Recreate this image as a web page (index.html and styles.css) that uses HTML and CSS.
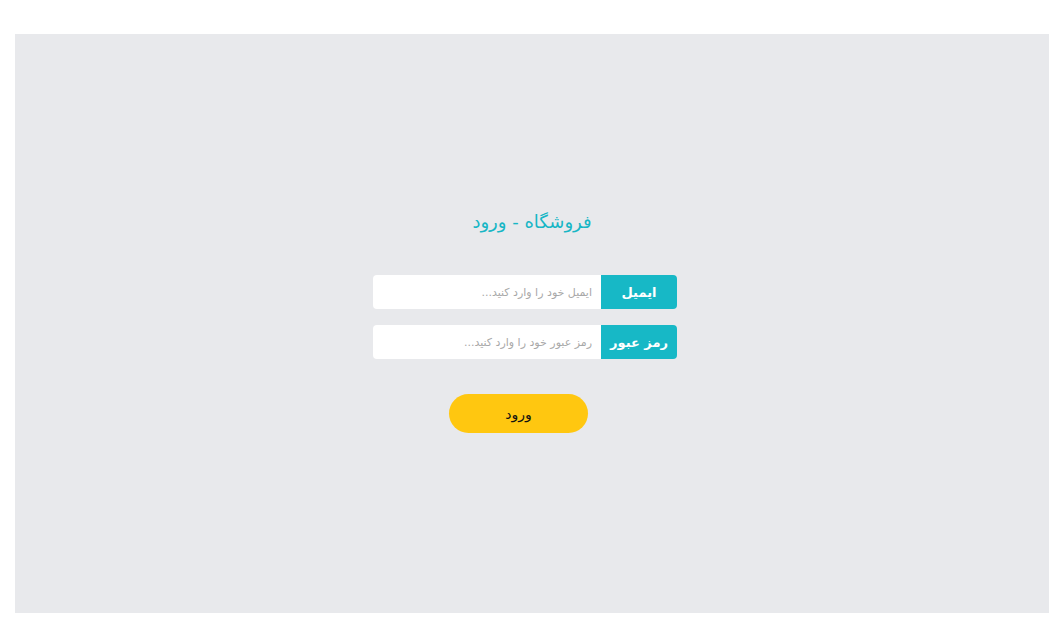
FILE: index.html
```html
<!DOCTYPE html>
<html lang="fa" dir="rtl">
<head>
<meta charset="utf-8">
<title>فروشگاه - ورود</title>
<link rel="stylesheet" href="styles.css">
</head>
<body>
<div class="panel">
  <div class="login">
    <h1 class="title">فروشگاه - ورود</h1>
    <form class="form">
      <div class="group">
        <span class="label">ایمیل</span>
        <input class="field" type="text" placeholder="ایمیل خود را وارد کنید...">
      </div>
      <div class="group">
        <span class="label">رمز عبور</span>
        <input class="field" type="password" placeholder="رمز عبور خود را وارد کنید...">
      </div>
      <button class="btn" type="button">ورود</button>
    </form>
  </div>
</div>
</body>
</html>
```
FILE: styles.css
```css
html, body {
  margin: 0;
  padding: 0;
  background: #ffffff;
}
body {
  padding: 34px 8px 0 15px;
  font-family: "DejaVu Sans", "Noto Sans", sans-serif;
}
.panel {
  background: #e8e9ec;
  height: 579px;
  display: flex;
  justify-content: center;
}
.login {
  display: flex;
  flex-direction: column;
  align-items: center;
  padding-top: 173px;
}
.title {
  margin: 0;
  font-size: 18px;
  font-weight: normal;
  color: #17b6c5;
  line-height: 30px;
  height: 30px;
}
.form {
  margin: 38px 14px 0 0;
  width: 304px;
  display: flex;
  flex-direction: column;
  align-items: center;
}
.group {
  display: flex;
  width: 304px;
  height: 34px;
  margin-bottom: 16px;
}
.label {
  width: 76px;
  flex: none;
  background: #17b8c6;
  color: #ffffff;
  font-weight: bold;
  font-size: 13px;
  display: flex;
  align-items: center;
  justify-content: center;
  border-radius: 0 4px 4px 0;
}
.field {
  flex: 1;
  min-width: 0;
  border: none;
  background: #ffffff;
  border-radius: 4px 0 0 4px;
  padding: 0 9px;
  font-family: inherit;
  font-size: 11px;
  color: #333;
  outline: none;
}
.field::placeholder {
  color: #a8a8a8;
}
.btn {
  margin-top: 19px;
  margin-right: 13px;
  width: 139px;
  height: 39px;
  border: none;
  border-radius: 20px;
  background: #ffc710;
  color: #111;
  font-family: inherit;
  font-size: 14px;
}
```
